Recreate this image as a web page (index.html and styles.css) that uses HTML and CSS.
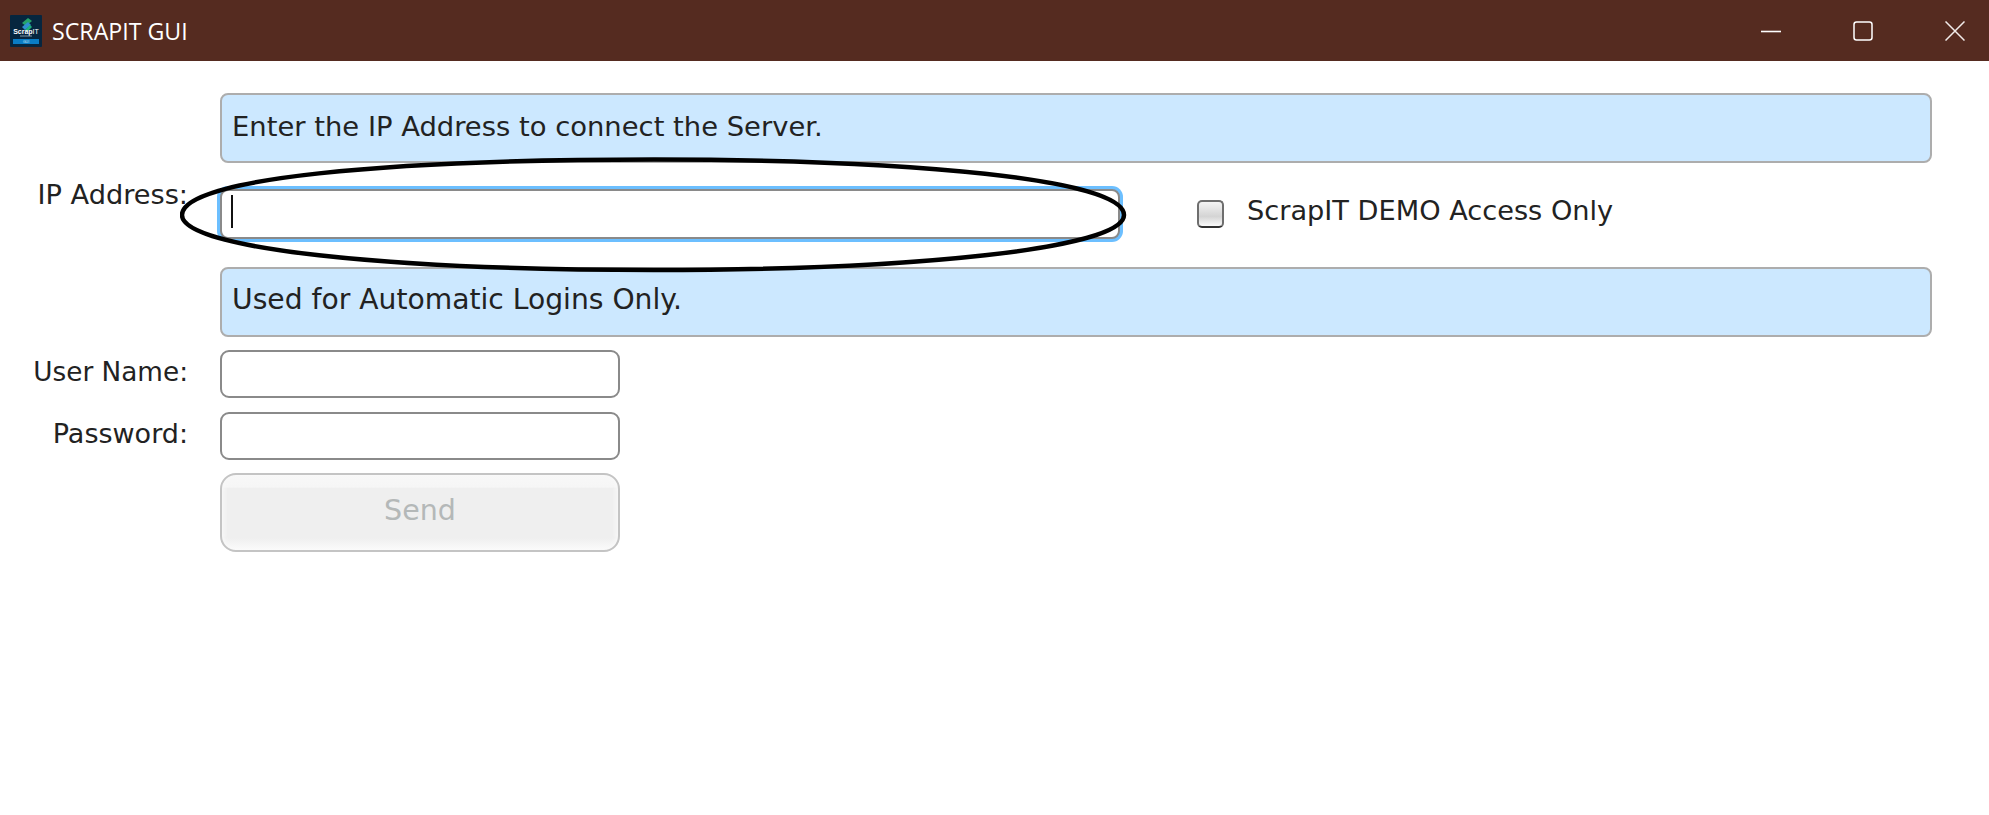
FILE: index.html
```html
<!DOCTYPE html>
<html lang="en">
<head>
<meta charset="utf-8">
<title>SCRAPIT GUI</title>
<link rel="stylesheet" href="styles.css">
</head>
<body>
<header class="titlebar">
  <svg class="logo" viewBox="0 0 32 32" width="32" height="32" aria-hidden="true">
    <rect width="32" height="32" rx="1" fill="#06263f"/>
    <path d="M12 8 L18 3 L22 6 L16 11 Z" fill="#27a36a"/>
    <path d="M12 12 L18 7 L21 10 L15 15 Z" fill="#2f8fd0"/>
    <path d="M15 15 L20 10 L22 12 L17 17 Z" fill="#1fb27a"/>
    <text x="16" y="18.5" class="logo-name">Scrap<tspan class="logo-it">IT</tspan></text>
    <rect x="10" y="20.5" width="12" height="1" fill="#7f95a6"/>
    <rect x="3" y="24" width="26" height="5" fill="#0a7cc4"/>
    <text x="16" y="28" class="logo-gui">GUI</text>
  </svg>
  <span class="title">SCRAPIT GUI</span>
  <div class="controls">
    <svg class="ctl" width="20" height="20" viewBox="0 0 20 20"><path d="M0 10.5 H20" stroke="#fff" stroke-width="1.6" fill="none"/></svg>
    <svg class="ctl" width="20" height="20" viewBox="0 0 20 20"><rect x="1" y="1" width="18" height="18" rx="2.5" stroke="#fff" stroke-width="1.5" fill="none"/></svg>
    <svg class="ctl" width="20" height="20" viewBox="0 0 20 20"><path d="M0.5 0.5 L19.5 19.5 M19.5 0.5 L0.5 19.5" stroke="#f2ecea" stroke-width="1.5" fill="none"/></svg>
  </div>
</header>

<main class="form">
  <div class="notice">Enter the IP Address to connect the Server.</div>

  <div class="ip-row">
    <label class="label label-ip">IP Address:</label>
    <div class="field field-focus"><span class="caret"></span></div>
    <div class="check-wrap">
      <span class="checkbox"></span>
      <span class="check-text">ScrapIT DEMO Access Only</span>
    </div>
  </div>

  <div class="notice notice-second">Used for Automatic Logins Only.</div>

  <div class="login-row login-user">
    <label class="label label-login label-user">User Name:</label>
    <input class="field field-small" type="text">
  </div>
  <div class="login-row login-pass">
    <label class="label label-login label-pass">Password:</label>
    <input class="field field-small" type="password">
  </div>
  <div class="login-row login-send">
    <button class="send" type="button" disabled>Send</button>
  </div>

  <svg class="ellipse" width="948" height="118" viewBox="0 0 948 118" aria-hidden="true">
    <path d="M2 58 C2 21 210 2.5 474 2.5 C730 2.5 944 22 944 58 C944 92 730 113 474 113 C210 113 2 92 2 58 Z" fill="none" stroke="#000" stroke-width="4.5"/>
  </svg>
</main>
</body>
</html>
```

FILE: styles.css
```css
* { box-sizing: border-box; }
html, body { margin: 0; height: 100%; }
body {
  width: 1989px;
  height: 815px;
  overflow: hidden;
  background: #fff;
  font-family: "DejaVu Sans", sans-serif;
  color: #222;
}
.titlebar {
  height: 61px;
  background: #552b20;
  display: flex;
  align-items: center;
  padding-left: 10px;
  color: #fff;
}
.logo { flex: none; margin-right: 10px; }
.logo-name { font: 700 7px "Liberation Sans", sans-serif; fill: #fff; text-anchor: middle; }
.logo-it { font-weight: 400; }
.logo-gui { font: 400 3.5px "Liberation Sans", sans-serif; fill: #cfe8f8; text-anchor: middle; }
.title { font: 400 23.2px "Open Sans", sans-serif; }
.controls {
  margin-left: auto;
  display: flex;
  gap: 72px;
  padding-right: 24px;
}
.ctl { display: block; }

.form {
  position: relative;
  padding: 32px 57px 0 0;
  display: flex;
  flex-direction: column;
}
.notice {
  margin-left: 220px;
  height: 70px;
  background: #cce8ff;
  border: 2px solid #adadad;
  border-radius: 8px;
  padding: 14px 10px 0;
  font-size: 27.4px;
  line-height: 36px;
}
.notice-second { padding-top: 13px; font-size: 28.2px; }
.label {
  width: 188px;
  flex: none;
  text-align: right;
  font-size: 27.2px;
  line-height: 36px;
}
.label-login { margin-bottom: 5px; }
.label-user { font-size: 26.3px; }
.label-pass { font-size: 27px; }
.ip-row {
  display: flex;
  height: 104px;
  align-items: flex-start;
}
.label-ip { margin-top: 14px; }
.field {
  display: block;
  background: #fff;
  border: 2px solid #8a8a8a;
  border-radius: 8px;
  padding: 0;
  outline: none;
}
.field-focus {
  position: relative;
  margin: 26px 0 0 32px;
  width: 900px;
  height: 50px;
  box-shadow: 0 0 0 3px #6cbfff;
}
.caret {
  position: absolute;
  left: 9px;
  top: 4px;
  width: 2px;
  height: 33px;
  background: #111;
}
.check-wrap {
  display: flex;
  align-items: flex-start;
  margin: 30px 0 0 77px;
  gap: 23px;
}
.checkbox {
  display: block;
  margin-top: 7px;
  width: 27px;
  height: 28px;
  border: 2px solid #6e6e6e;
  border-bottom-color: #333;
  border-radius: 5px;
  background: linear-gradient(#f4f4f4 0, #dcdcdc 45%, #d4d4d4 60%, #fbfbfb 100%);
}
.check-text { font-size: 27.2px; line-height: 36px; }
.login-row {
  display: flex;
  align-items: center;
}
.login-user { margin-top: 13px; }
.login-pass { margin-top: 14px; }
.login-send { margin-top: 13px; padding-left: 220px; }
.field-small {
  margin-left: 32px;
  width: 400px;
  height: 48px;
  border-radius: 9px;
}
.send {
  width: 400px;
  height: 79px;
  border: 2px solid #c4c4c4;
  border-radius: 16px;
  background: linear-gradient(#f8f8f8 0, #f6f6f6 16%, #efefef 18%, #efefef 84%, #fbfbfb 100%);
  box-shadow: inset 4px 0 4px -2px #f9f9f9, inset -4px 0 4px -2px #f9f9f9;
  color: #b4b8b8;
  font: 400 28.5px "DejaVu Sans", sans-serif;
  padding: 0 0 4px;
}
.ellipse {
  position: absolute;
  left: 180px;
  top: 96px;
}
```
